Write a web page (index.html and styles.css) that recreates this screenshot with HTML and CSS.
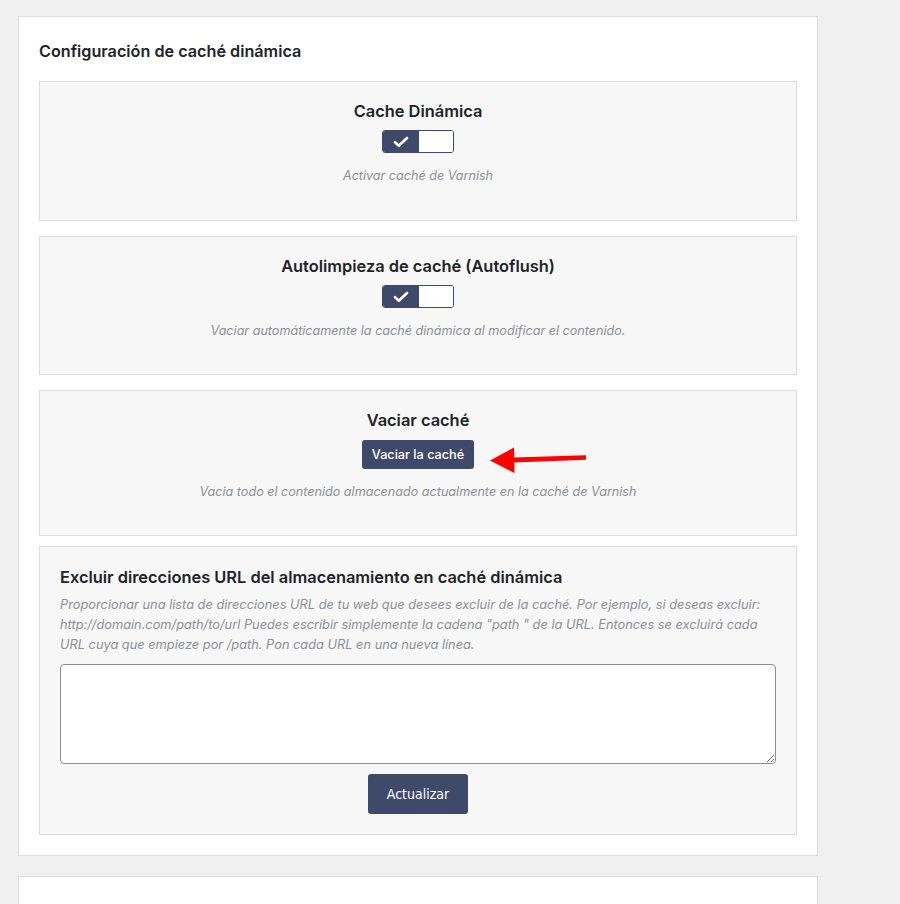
FILE: index.html
```html
<!DOCTYPE html>
<html lang="es">
<head>
    <meta charset="UTF-8">
    <meta name="viewport" content="width=device-width, initial-scale=1.0">
    <title>Configuración de caché dinámica</title>
    <link rel="stylesheet" href="styles.css">
</head>
<body>
    <div class="card">
        <h2 class="card-title">Configuración de caché dinámica</h2>

        <div class="option">
            <h3>Cache Dinámica</h3>
            <div class="toggle">
                <span class="toggle-on">
                    <svg width="16" height="12" viewBox="0 0 16 12"><path d="M2 6.2l3.8 3.6L14 2" fill="none" stroke="#fff" stroke-width="2.6" stroke-linecap="round" stroke-linejoin="round"/></svg>
                </span>
                <span class="toggle-off"></span>
            </div>
            <p class="desc">Activar caché de Varnish</p>
        </div>

        <div class="option option-autoflush">
            <h3>Autolimpieza de caché (Autoflush)</h3>
            <div class="toggle">
                <span class="toggle-on">
                    <svg width="16" height="12" viewBox="0 0 16 12"><path d="M2 6.2l3.8 3.6L14 2" fill="none" stroke="#fff" stroke-width="2.6" stroke-linecap="round" stroke-linejoin="round"/></svg>
                </span>
                <span class="toggle-off"></span>
            </div>
            <p class="desc">Vaciar automáticamente la caché dinámica al modificar el contenido.</p>
        </div>

        <div class="option option-flush">
            <h3>Vaciar caché</h3>
            <button class="btn btn-small">Vaciar la caché</button>
            <p class="desc">Vacia todo el contenido almacenado actualmente en la caché de Varnish</p>
            <svg class="arrow" width="100" height="30" viewBox="0 0 100 30">
                <path d="M24 11.5L97 9.2L97 13.8L24 16.5Z" fill="#f00"/>
                <path d="M1 14.5L25 1.5L25.5 27Z" fill="#f00"/>
            </svg>
        </div>

        <div class="option option-exclude">
            <h3>Excluir direcciones URL del almacenamiento en caché dinámica</h3>
            <p class="desc">Proporcionar una lista de direcciones URL de tu web que desees excluir de la caché. Por ejemplo, si deseas excluir: http://domain.com/path/to/url Puedes escribir simplemente la cadena "path " de la URL. Entonces se excluirá cada URL cuya que empieze por /path. Pon cada URL en una nueva línea.</p>
            <textarea class="urls"></textarea>
            <button class="btn btn-update">Actualizar</button>
        </div>
    </div>

    <div class="card card-next">
        <h2 class="card-title">Configuración de caché estática</h2>
    </div>
</body>
</html>
```

FILE: styles.css
```css
body {
    font-family: 'Inter', 'Noto Sans', sans-serif;
    background-color: #f0f0f1;
    margin: 0;
    padding: 16px 0 0 18px;
    color: #1d2327;
}
.card {
    background: #fff;
    border: 1px solid #dcdcde;
    width: 800px;
    box-sizing: border-box;
    padding: 24px 20px 20px;
    margin-bottom: 20px;
}
.card-next {
    padding-top: 27px;
}
.card-title {
    font-size: 16.2px;
    line-height: 20px;
    font-weight: 600;
    margin: 0 0 20px;
}
.option {
    background: #f7f7f7;
    border: 1px solid #dcdcde;
    padding: 19px 20px 35px;
    margin-bottom: 15px;
    text-align: center;
}
.option h3 {
    font-size: 16.4px;
    line-height: 20px;
    font-weight: 600;
    margin: 0;
}
.option-autoflush {
    padding-bottom: 34px;
}
.toggle {
    display: inline-flex;
    width: 72px;
    height: 23px;
    box-sizing: border-box;
    border: 1px solid #3f4a6a;
    border-radius: 3px;
    overflow: hidden;
    margin-top: 9px;
    vertical-align: top;
}
.toggle-on {
    width: 36px;
    background: #3f4a6a;
    display: flex;
    align-items: center;
    justify-content: center;
}
.toggle-off {
    flex: 1;
    background: #fff;
}
.desc {
    font-size: 12.6px;
    line-height: 18px;
    font-style: italic;
    color: #8c8f94;
    margin: 14px 0 0;
}
.btn {
    display: block;
    margin: 10px auto 0;
    border: none;
    border-radius: 3px;
    background: #3f4a6a;
    color: #fff;
    cursor: pointer;
}
.btn-small {
    font-family: 'Inter', 'Noto Sans', sans-serif;
    font-size: 12.7px;
    font-weight: 500;
    height: 29px;
    padding: 0 10px;
}
.option-flush {
    position: relative;
    padding-bottom: 34px;
    margin-bottom: 10px;
}
.arrow {
    position: absolute;
    left: 449px;
    top: 55px;
}
.option-exclude {
    text-align: left;
    padding-bottom: 20px;
    margin-bottom: 0;
}
.option-exclude h3 {
    line-height: 22px;
}
.option-exclude .desc {
    font-size: 12.8px;
    line-height: 20px;
    margin-top: 7px;
}
.urls {
    display: block;
    width: 100%;
    height: 100px;
    box-sizing: border-box;
    margin-top: 9px;
    border: 1px solid #8c8f94;
    border-radius: 4px;
    background: #fff;
}
.btn-update {
    font-family: 'DejaVu Sans Condensed', 'DejaVu Sans', sans-serif;
    font-stretch: condensed;
    font-size: 14px;
    width: 100px;
    height: 40px;
}
```
